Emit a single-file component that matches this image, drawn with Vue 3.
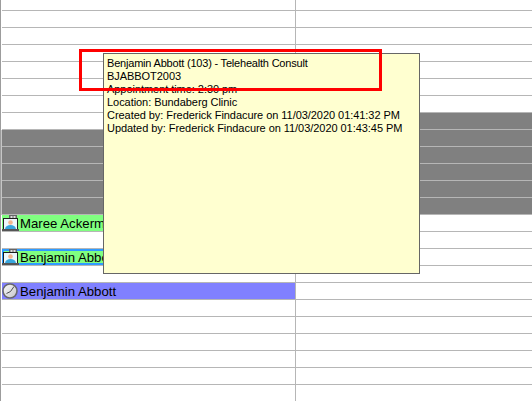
<script setup>
const rows = Array.from({ length: 24 }, (_, i) => {
  const row = { id: i, left: '', right: '', icon: '', text: '', shaded: i >= 8 && i <= 12 }
  if (i >= 8 && i <= 12) row.left = 'grey'
  if (i >= 7 && i <= 12) row.right = 'grey'
  if (i === 13) Object.assign(row, { left: 'green', icon: 'tele', text: 'Maree Ackermann' })
  if (i === 15) Object.assign(row, { left: 'selected', icon: 'tele', text: 'Benjamin Abbott' })
  if (i === 17) Object.assign(row, { left: 'purple', icon: 'clock', text: 'Benjamin Abbott' })
  return row
})
const tipLines = [
  { text: 'Benjamin Abbott (103) - Telehealth Consult', tight: true },
  { text: 'BJABBOT2003', tight: false },
  { text: 'Appointment time: 2:30 pm', tight: false },
  { text: 'Location: Bundaberg Clinic', tight: false },
  { text: 'Created by: Frederick Findacure on 11/03/2020 01:41:32 PM', tight: false },
  { text: 'Updated by: Frederick Findacure on 11/03/2020 01:43:45 PM', tight: false }
]
</script>

<template>
  <div class="screen">
    <div class="grid">
      <div v-for="r in rows" :key="r.id" class="row" :class="{ first: r.id === 0, shaded: r.shaded }">
        <div class="cell left" :class="r.left">
          <svg v-if="r.icon === 'tele'" class="icon tele" viewBox="0 0 18 18">
            <rect x="7" y="2" width="8" height="5" fill="#666" />
            <rect x="8.500" y="3" width="2" height="2" fill="#ddd" />
            <rect x="11.500" y="3" width="2" height="2" fill="#ddd" />
            <rect x="1.500" y="5.500" width="14" height="11" fill="#eef8fc" stroke="#1c1c1c" />
            <circle cx="8.500" cy="9.500" r="2.300" fill="#f3b68e" />
            <path d="M3 16c.5-3 2.800-4 5.500-4s5 1 5.500 4z" fill="#38a6dd" />
            <rect x="0" y="16" width="17" height="2" fill="#555" />
          </svg>
          <svg v-if="r.icon === 'clock'" class="icon" viewBox="0 0 18 16">
            <defs>
              <linearGradient id="face" x1="0" y1="0" x2="1" y2="1">
                <stop offset="0" stop-color="#fbfbfb" />
                <stop offset="1" stop-color="#c4c4c8" />
              </linearGradient>
            </defs>
            <circle cx="8" cy="8" r="7" fill="url(#face)" stroke="#67676c" stroke-width="1.600" />
            <path d="M12 3.500L8.500 8.500L4.500 10.500" stroke="#4d4d52" stroke-width="1" fill="none" />
          </svg>
          <span v-if="r.text" class="label">{{ r.text }}</span>
        </div>
        <div class="cell right" :class="r.right"></div>
      </div>
    </div>
    <div class="tip">
      <div v-for="l in tipLines" :key="l.text" class="tip-line" :class="{ tight: l.tight }">{{ l.text }}</div>
    </div>
    <div class="mark"></div>
  </div>
</template>

<style scoped>
.screen {
  position: relative;
  width: 532px;
  height: 401px;
  overflow: hidden;
  background: #fff;
  font-family: "Liberation Sans", Arial, sans-serif;
  color: #000;
}
.grid {
  display: flex;
  flex-direction: column;
  border-left: 1px solid #9c9c9c;
}
.row {
  display: flex;
  height: 17px;
  flex: none;
  box-sizing: border-box;
  margin-left: 1px;
  border-bottom: 1px solid #b6b6b6;
}
.row.first {
  height: 11px;
}
.row.shaded {
  box-shadow: -1px 0 0 #c6c6c6;
}
.cell {
  box-sizing: border-box;
  display: flex;
  align-items: center;
  white-space: nowrap;
}
.left {
  width: 294px;
  flex: none;
  border-right: 1px solid #b6b6b6;
  overflow: visible;
}
.right {
  flex: 1;
}
.grey {
  background: #808080;
  border-right-color: #808080;
}
.green {
  background: #80ff80;
}
.purple {
  background: #8080ff;
}
.selected {
  background: #80ff80;
  box-shadow: inset 0 0 0 2px #2f9bff;
}
.icon {
  width: 18px;
  height: 16px;
  flex: none;
}
.icon.tele {
  height: 18px;
  align-self: flex-end;
}
.label {
  font-size: 13.2px;
}
.tip {
  position: absolute;
  left: 103px;
  top: 53px;
  width: 317px;
  height: 221px;
  box-sizing: border-box;
  background: #ffffd0;
  border: 1px solid #666;
  padding: 3px;
  font-size: 11px;
  line-height: 13px;
  letter-spacing: -0.05px;
  white-space: nowrap;
}
.tight {
  letter-spacing: -0.2px;
}
.mark {
  position: absolute;
  left: 79px;
  top: 49px;
  width: 303px;
  height: 42px;
  box-sizing: border-box;
  border: 3px solid #f00;
}
</style>
